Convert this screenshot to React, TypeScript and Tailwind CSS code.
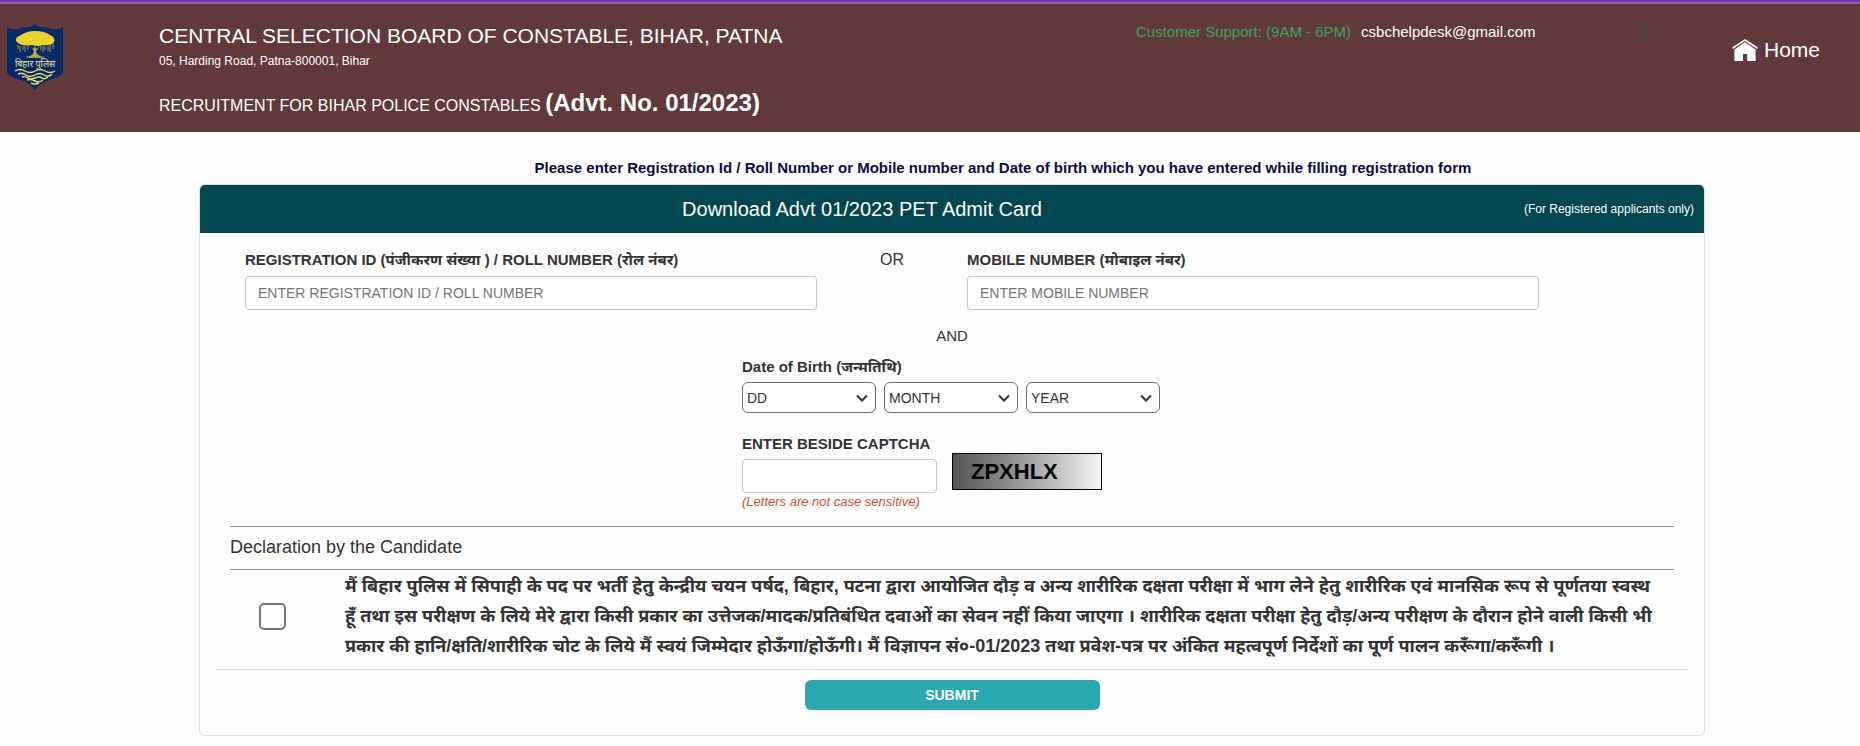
import { useState } from 'react';
import type { ReactNode } from 'react';

const DAYS = Array.from({ length: 31 }, (_, i) => String(i + 1));
const MONTHS = ['JAN', 'FEB', 'MAR', 'APR', 'MAY', 'JUN', 'JUL', 'AUG', 'SEP', 'OCT', 'NOV', 'DEC'];
const YEARS = Array.from({ length: 40 }, (_, i) => String(2005 - i));

const DECLARATION = [
  'मैं बिहार पुलिस में सिपाही के पद पर भर्ती हेतु केन्द्रीय चयन पर्षद, बिहार, पटना द्वारा आयोजित दौड़ व अन्य शारीरिक दक्षता परीक्षा में भाग लेने हेतु शारीरिक एवं मानसिक रूप से पूर्णतया स्वस्थ',
  'हूँ तथा इस परीक्षण के लिये मेरे द्वारा किसी प्रकार का उत्तेजक/मादक/प्रतिबंधित दवाओं का सेवन नहीं किया जाएगा । शारीरिक दक्षता परीक्षा हेतु दौड़/अन्य परीक्षण के दौरान होने वाली किसी भी',
  'प्रकार की हानि/क्षति/शारीरिक चोट के लिये मैं स्वयं जिम्मेदार होऊँगा/होऊँगी। मैं विज्ञापन सं०-01/2023 तथा प्रवेश-पत्र पर अंकित महत्वपूर्ण निर्देशों का पूर्ण पालन करूँगा/करूँगी ।',
];

function PoliceLogo() {
  return (
    <svg viewBox="0 0 56 66" className="h-[66px] w-14" role="img" aria-label="Bihar Police">
      <path d="M0 3 Q8 8 16 3 Q23 5 28 0 Q33 5 40 3 Q48 8 56 3 V49 Q52 54 42 56 Q33 59 28 66 Q23 59 14 56 Q4 54 0 49Z" fill="#062a66" />
      <path d="M9 17 Q8 13 14 11 Q20 7 28 7 Q38 7 43 11 Q49 14 47 18 Q44 22 36 21 Q31 23 25 21 Q14 23 9 17Z" fill="#e9d32e" />
      <path
        d="M11 21v4M13 22v6M16 22v4M18 22v6M21 22v4M34 22v4M36 22v6M38 22v4M41 22v5M43 21v7M46 19v6"
        stroke="#9a9b48"
        strokeWidth="1"
      />
      <path d="M23 22l4 5-1 3-6 4h16l-6-4-1-3 4-5-4 3-1-3-2 3z" fill="#b5ad48" />
      <path d="M19 33h18" stroke="#9a9b48" strokeWidth="1" />
      <text
        x="28"
        y="43"
        textAnchor="middle"
        fontSize="9"
        fill="#e8e3a0"
        fontFamily="'Noto Sans Devanagari', 'Noto Sans', sans-serif"
      >
        बिहार पुलिस
      </text>
      <g fill="none" stroke="#e6dc6a" strokeWidth="1.4">
        <path d="M8 47q5-3 10 0t10 0t10 0t10 0" />
        <path d="M11 50q4-2 8 1t9 0t9 0t8-1" />
        <path d="M15 53q4-1 6 1t7 0t7 0t6-1" />
        <path d="M20 56q4-1 8 1t8-1" />
        <path d="M24 59q4 2 8 0" />
      </g>
    </svg>
  );
}

function HomeIcon() {
  return (
    <svg viewBox="0 0 26 22" className="h-[22px] w-[26px]" fill="#fff" aria-hidden="true">
      <path d="M13 0 26 8.4 25 10 13 2 1 10 0 8.4Z" />
      <path d="M13 3.2 23.6 10.4V22H15.2V15H11V22H2.4V10.4Z" />
    </svg>
  );
}

function Header() {
  return (
    <header className="flex h-[132px] items-start border-t-2 border-[#6f3bab] bg-[#61393a] text-white">
      <div className="flex h-full w-full items-start border-t-2 border-[#94659c]">
        <div className="w-[159px] shrink-0 pt-5 pl-[7px]">
          <PoliceLogo />
        </div>
        <div className="flex-1 pt-4">
          <h1 className="text-[21px] leading-8">CENTRAL SELECTION BOARD OF CONSTABLE, BIHAR, PATNA</h1>
          <p className="text-xs leading-[18px]">05, Harding Road, Patna-800001, Bihar</p>
          <p className="mt-[17px] text-base leading-8">
            RECRUITMENT FOR BIHAR POLICE CONSTABLES <b className="text-2xl leading-8">(Advt. No. 01/2023)</b>
          </p>
        </div>
        <div className="flex w-[724px] shrink-0">
          <p className="flex w-[505px] gap-[10px] pt-4 text-[15px] leading-6">
            <span className="text-[#3ba362]">Customer Support: (9AM - 6PM)</span>
            <a href="mailto:csbchelpdesk@gmail.com">csbchelpdesk@gmail.com</a>
          </p>
          <svg viewBox="0 0 8 26" className="mt-3 h-[26px] w-2" aria-hidden="true">
            <path d="M4 0 5 9 8 19 5 24 1 26 2 12Z" fill="#47463f" />
          </svg>
          <a href="#home" className="ml-auto flex items-center gap-[6px] pt-[30px] pr-10 text-[21px] leading-8">
            <HomeIcon />
            Home
          </a>
        </div>
      </div>
    </header>
  );
}

function Field({ id, label, placeholder }: { id: string; label: ReactNode; placeholder: string }) {
  return (
    <div className="flex-1">
      <label htmlFor={id} className="block text-[15px] leading-6 font-bold whitespace-nowrap">
        {label}
      </label>
      <input
        id={id}
        type="text"
        placeholder={placeholder}
        className="mt-1 block h-[34px] w-full rounded border border-[#c4c4cc] bg-white px-3 text-sm placeholder:text-[#757575]"
      />
    </div>
  );
}

function DateSelect({ id, label, options }: { id: string; label: string; options: string[] }) {
  return (
    <div className="relative">
      <select
        id={id}
        aria-label={label}
        className="block h-[31px] w-[134px] appearance-none rounded-md border border-[#6b6b70] bg-white px-1 text-sm"
      >
        <option>{label}</option>
        {options.map((o) => (
          <option key={o}>{o}</option>
        ))}
      </select>
      <svg viewBox="0 0 12 8" className="pointer-events-none absolute top-3 right-2 h-2 w-3" aria-hidden="true">
        <path d="M1 1.5 6 6.5 11 1.5" fill="none" stroke="#333" strokeWidth="2" />
      </svg>
    </div>
  );
}

export default function App() {
  const [agreed, setAgreed] = useState(false);

  return (
    <div className="min-h-screen bg-[#fefdfe] font-['Liberation_Sans','Noto_Sans_Devanagari','Noto_Sans',sans-serif] text-[#333]">
      <Header />

      <main className="pr-[155px] pb-2 pl-[199px]">
        <p className="pt-6 pb-1 pl-[102px] text-center text-[15px] leading-6 font-bold text-[#0b0b45]">
          Please enter Registration Id / Roll Number or Mobile number and Date of birth which you have entered while filling
          registration form
        </p>

        <form
          className="overflow-hidden rounded-md border border-[#dde0e6]"
          onSubmit={(e) => e.preventDefault()}
        >
          <div className="flex h-12 items-center bg-[#02474f] px-[10px] text-white">
            <span className="flex-1" />
            <h2 className="text-xl">Download Advt 01/2023 PET Admit Card</h2>
            <span className="flex-1 pl-[180px] text-right text-xs">(For Registered applicants only)</span>
          </div>

          <div className="flex pt-[15px] pr-[165px] pl-[45px]">
            <Field
              id="registration"
              label="REGISTRATION ID (पंजीकरण संख्या ) / ROLL NUMBER (रोल नंबर)"
              placeholder="ENTER REGISTRATION ID / ROLL NUMBER"
            />
            <span className="w-[150px] text-center text-base leading-6">OR</span>
            <Field id="mobile" label="MOBILE NUMBER (मोबाइल नंबर)" placeholder="ENTER MOBILE NUMBER" />
          </div>

          <p className="mt-[14px] text-center text-[15px] leading-6">AND</p>

          <div className="pl-[542px]">
            <fieldset className="mt-[7px]">
              <legend className="text-[15px] leading-6 font-bold">Date of Birth (जन्मतिथि)</legend>
              <div className="mt-[3px] flex gap-2">
                <DateSelect id="day" label="DD" options={DAYS} />
                <DateSelect id="month" label="MONTH" options={MONTHS} />
                <DateSelect id="year" label="YEAR" options={YEARS} />
              </div>
            </fieldset>

            <div className="mt-[19px] flex items-start gap-[15px]">
              <div className="w-[195px]">
                <label htmlFor="captcha" className="block text-[15px] leading-6 font-bold whitespace-nowrap">
                  ENTER BESIDE CAPTCHA
                </label>
                <input id="captcha" type="text" className="mt-[3px] block h-[34px] w-full rounded border border-[#c4c4cc] bg-white px-3 text-sm" />
                <p className="text-[13px] leading-[18px] text-[#c9502f] italic">(Letters are not case sensitive)</p>
              </div>
              <div className="mt-[21px] flex h-[37px] w-[150px] items-center border border-black bg-linear-to-r from-[#545454] to-[#f5f5f5] pl-[18px] text-[22px] font-bold text-black">
                ZPXHLX
              </div>
            </div>
          </div>

          <div className="mx-[30px] mt-[15px] border-y border-[#8f8f94] pt-[7px] pb-[9px] text-lg leading-[26px]">
            Declaration by the Candidate
          </div>

          <div className="mx-4 flex items-center border-b border-[#dcdce0] pt-[1px] pb-2">
            <input
              id="declaration"
              type="checkbox"
              checked={agreed}
              onChange={(e) => setAgreed(e.target.checked)}
              className="ml-[43px] size-[27px] shrink-0 appearance-none rounded-[5px] border-2 border-[#767676] bg-white checked:bg-[#2aa7b0]"
            />
            <label htmlFor="declaration" className="ml-[59px] text-lg leading-[30px] font-bold">
              {DECLARATION.map((line) => (
                <span key={line} className="block whitespace-nowrap">
                  {line}
                </span>
              ))}
            </label>
          </div>

          <div className="flex justify-center pt-[10px] pb-[25px]">
            <button type="submit" className="h-[30px] w-[295px] rounded-md bg-[#2aa7b0] text-sm font-bold text-white">
              SUBMIT
            </button>
          </div>
        </form>
      </main>
    </div>
  );
}
